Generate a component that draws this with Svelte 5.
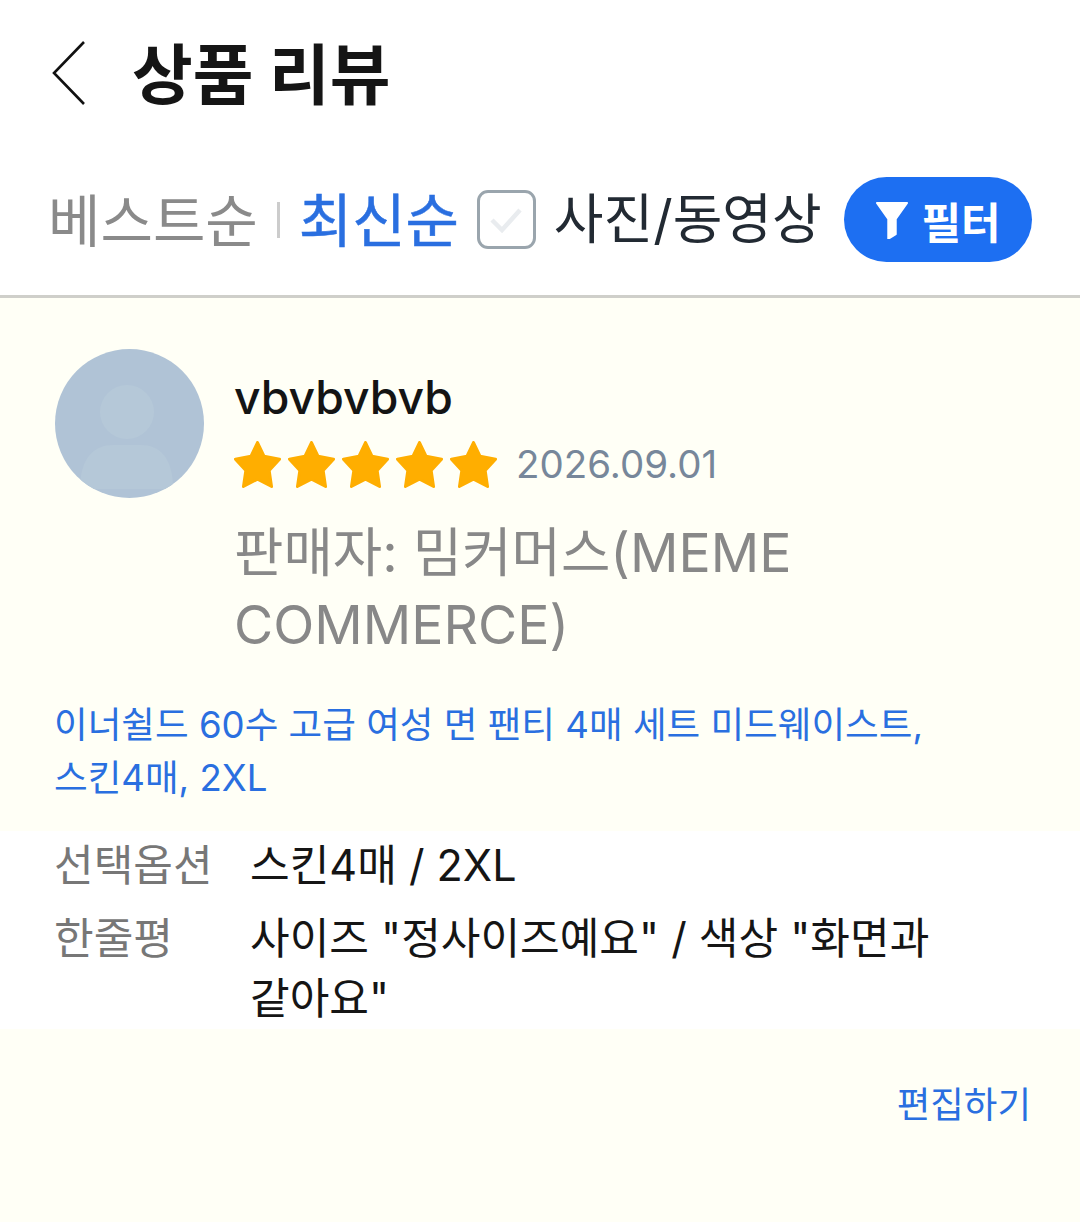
<script>
  const stars = [0, 1, 2, 3, 4];
</script>

<div class="page">
  <header class="top">
    <svg class="back" width="36" height="66" viewBox="0 0 36 66" fill="none"><path d="M33 2 L3 33 L33 64" stroke="#111" stroke-width="2.6"/></svg>
    <h1>상품 리뷰</h1>
  </header>

  <div class="sortbar">
    <span class="sort muted">베스트순</span>
    <span class="sep"></span>
    <span class="sort active">최신순</span>
    <span class="check">
      <svg width="32" height="26" viewBox="0 0 32 26" fill="none"><path d="M2 13 L12 23 L30 3" stroke="#e9ecef" stroke-width="4.5"/></svg>
    </span>
    <span class="photo">사진/동영상</span>
    <button class="filter">
      <svg width="34" height="38" viewBox="0 0 36 40"><path d="M2 2 H34 L22 19 V35 L14 40 V19 Z" fill="#fff" stroke="#fff" stroke-width="2" stroke-linejoin="round"/></svg>
      <span>필터</span>
    </button>
  </div>

  <main class="content">
    <section class="profile">
      <div class="avatar">
        <svg width="149" height="149" viewBox="0 0 149 149">
          <circle cx="72" cy="63" r="27" fill="#b5c8d8"/>
          <path d="M25 140 C25 108 40 96 58 96 H86 C104 96 118 108 118 140 Z" fill="#b5c8d8"/>
        </svg>
      </div>
      <div class="meta">
        <div class="name">vbvbvbvb</div>
        <div class="ratingline">
          <div class="stars">
            {#each stars as s (s)}
              <svg width="47" height="47" viewBox="0 0 50 48" preserveAspectRatio="none"><path d="M25 1.500 L32 15.500 L48.500 18.500 L37.500 30 L40 46.500 L25 39 L10 46.500 L12.500 30 L1.500 18.500 L18 15.500 Z" fill="#ffae00" stroke="#ffae00" stroke-width="3" stroke-linejoin="round"/></svg>
            {/each}
          </div>
          <span class="date">2026.09.01</span>
        </div>
        <div class="seller">판매자: 밈커머스(MEME COMMERCE)</div>
      </div>
    </section>

    <p class="product">이너쉴드 60수 고급 여성 면 팬티 4매 세트 미드웨이스트, 스킨4매, 2XL</p>

    <dl class="details">
      <div class="row"><dt>선택옵션</dt><dd>스킨4매 / 2XL</dd></div>
      <div class="row"><dt>한줄평</dt><dd>사이즈 "정사이즈예요" / 색상 "화면과 같아요"</dd></div>
    </dl>

    <div class="actions"><span class="edit">편집하기</span></div>
  </main>
</div>

<style>
  :global(body) {
    margin: 0;
    background: #fff;
  }
  .page {
    width: 1080px;
    height: 1222px;
    display: flex;
    flex-direction: column;
    overflow: hidden;
    font-family: Inter, "Noto Sans CJK KR", sans-serif;
    color: #111;
  }
  .top {
    height: 146px;
    display: flex;
    align-items: center;
    padding-left: 51px;
    box-sizing: border-box;
  }
  .back {
    flex: none;
  }
  h1 {
    margin: 3px 0 0 45px;
    font-size: 66px;
    font-weight: 700;
    line-height: 1;
    color: #151515;
  }
  .sortbar {
    height: 152px;
    box-sizing: border-box;
    border-bottom: 3px solid #cfcfca;
    display: flex;
    align-items: center;
    padding: 0 48px 2px 48px;
  }
  .sort {
    font-size: 57px;
    line-height: 1;
    margin-top: 3px;
  }
  .muted {
    color: #8a8a8a;
  }
  .active {
    font-size: 58px;
    color: #2a6fe0;
    -webkit-text-stroke: 0.5px #2a6fe0;
  }
  .sep {
    width: 3px;
    height: 36px;
    background: #ccc;
    margin: 0 19px;
  }
  .check {
    width: 59px;
    height: 59px;
    box-sizing: border-box;
    border: 3px solid #9aa5ad;
    border-radius: 11px;
    margin-left: 18px;
    display: flex;
    align-items: center;
    justify-content: center;
  }
  .photo {
    margin-left: 18px;
    font-size: 54px;
    line-height: 1;
    color: #222a33;
  }
  .filter {
    margin-left: auto;
    width: 188px;
    height: 85px;
    border: 0;
    border-radius: 43px;
    background: #1d6ff2;
    color: #fff;
    display: flex;
    align-items: center;
    justify-content: center;
    gap: 12px;
    padding: 0;
    font-family: inherit;
    font-size: 43px;
    font-weight: 700;
  }
  .content {
    flex: 1;
    background: #fffff6;
    display: flex;
    flex-direction: column;
  }
  .profile {
    display: flex;
    padding: 51px 50px 0 55px;
    gap: 30px;
  }
  .avatar {
    width: 149px;
    height: 149px;
    border-radius: 50%;
    background: #b0c3d6;
    overflow: hidden;
    flex: none;
  }
  .avatar svg {
    display: block;
  }
  .meta {
    flex: 1;
    min-width: 0;
  }
  .name {
    font-size: 46.300px;
    line-height: 56px;
    margin-top: 20px;
    font-weight: 500;
    color: #141414;
  }
  .ratingline {
    display: flex;
    align-items: center;
    margin-top: 15px;
  }
  .stars {
    display: flex;
    gap: 7px;
  }
  .stars svg {
    display: block;
  }
  .date {
    margin-left: 19px;
    font-size: 38.500px;
    color: #77879a;
    line-height: 48px;
  }
  .seller {
    margin-top: 29px;
    font-size: 53.700px;
    line-height: 72px;
    color: #888;
  }
  .product {
    margin: 38px 140px 0 54px;
    font-size: 36.600px;
    line-height: 53px;
    color: #2a6fe0;
  }
  .details {
    margin: 26px 0 0;
    background: #fff;
    padding: 4px 55px 1px 54px;
    display: flex;
    flex-direction: column;
  }
  .row {
    display: flex;
    font-size: 43.100px;
    line-height: 60px;
  }
  .row + .row {
    margin-top: 13px;
  }
  dt {
    width: 196px;
    flex: none;
    color: #777;
  }
  dd {
    margin: 0;
    flex: 1;
    color: #151515;
    padding-right: 65px;
    word-break: keep-all;
  }
  .actions {
    display: flex;
    justify-content: flex-end;
    padding: 51px 49px 0 0;
  }
  .edit {
    font-size: 36.500px;
    line-height: 50px;
    color: #2a6fe0;
  }
</style>
